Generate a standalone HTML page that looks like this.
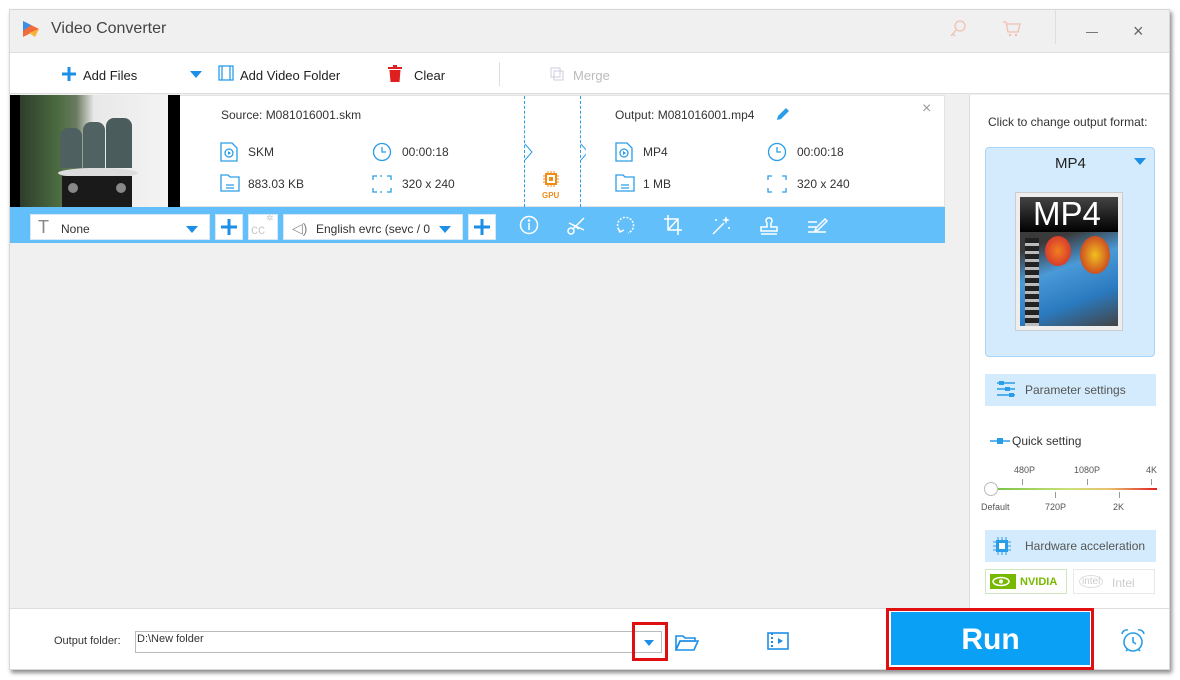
<!DOCTYPE html>
<html><head><meta charset="utf-8"><style>
*{box-sizing:border-box;margin:0;padding:0}
body{width:1180px;height:680px;background:#fff;font-family:"Liberation Sans",sans-serif;position:relative;overflow:hidden;font-size:12px;color:#333}
.a{position:absolute}
.win{left:9px;top:9px;width:1161px;height:661px;background:#f0f0f0;border:1px solid #d8d8d8;box-shadow:2px 3px 4px rgba(0,0,0,.45)}
.t{white-space:nowrap}
.ic{stroke:#2a9de8;fill:none;stroke-width:1.3}
.wi{stroke:#fff;fill:none;stroke-width:1.5}
.sel{background:#fff;border:1px solid #d6e8f7;height:26px}
</style></head><body>
<div class="a win"></div>
<!-- title -->
<svg class="a" style="left:21px;top:19px" width="22" height="20" viewBox="0 0 22 20"><path d="M2 2 L18 10 L2 18Z" fill="#f36b3a"/><path d="M2 2 L10 6 L2 12Z" fill="#3a8ee8"/><path d="M8 14 L18 10 L14 18Z" fill="#f8b43a"/></svg>
<div class="a t" style="left:51px;top:20px;font-size:16px;color:#444">Video Converter</div>
<svg class="a" style="left:948px;top:19px" width="20" height="20" viewBox="0 0 20 20"><circle cx="12" cy="7" r="5" fill="none" stroke="#f0c0b0" stroke-width="1.3"/><path d="M8 11 L3 17 M5 15l2 2" stroke="#f0c0b0" stroke-width="1.3"/></svg>
<svg class="a" style="left:1002px;top:19px" width="20" height="20" viewBox="0 0 20 20"><path d="M1 3h3l2 10h10l2-8H5" fill="none" stroke="#f0c0b0" stroke-width="1.3"/><circle cx="8" cy="16" r="1.2" fill="#f0c0b0"/><circle cx="14" cy="16" r="1.2" fill="#f0c0b0"/></svg>
<div class="a" style="left:1055px;top:10px;width:1px;height:34px;background:#ddd"></div>
<div class="a" style="left:1086px;top:32px;width:12px;height:1px;background:#777"></div>
<div class="a t" style="left:1133px;top:21px;font-size:18px;color:#666">×</div>
<!-- toolbar -->
<div class="a" style="left:10px;top:52px;width:1159px;height:42px;background:#fff;border-top:1px solid #ddd;border-bottom:1px solid #ddd"></div>
<svg class="a" style="left:61px;top:66px" width="16" height="16"><path d="M8 1v14M1 8h14" stroke="#1e8fe6" stroke-width="3"/></svg>
<div class="a t" style="left:83px;top:68px;font-size:13px;color:#222">Add Files</div>
<div class="a" style="left:190px;top:71px;border-left:6px solid transparent;border-right:6px solid transparent;border-top:7px solid #1e8fe6"></div>
<svg class="a" style="left:218px;top:65px" width="16" height="16"><rect x="1" y="1" width="14" height="14" class="ic" fill="none"/><path d="M4 1v14M12 1v14" class="ic"/></svg>
<div class="a t" style="left:240px;top:68px;font-size:13px;color:#222">Add Video Folder</div>
<svg class="a" style="left:388px;top:65px" width="14" height="17"><rect x="0" y="2" width="14" height="2" fill="#e02020"/><rect x="5" y="0" width="4" height="3" fill="#e02020"/><path d="M1.5 5h11l-1 12h-9z" fill="#e02020"/></svg>
<div class="a t" style="left:414px;top:68px;font-size:13px;color:#222">Clear</div>
<div class="a" style="left:499px;top:62px;width:1px;height:24px;background:#ddd"></div>
<svg class="a" style="left:550px;top:67px" width="14" height="14"><rect x="1" y="1" width="9" height="9" fill="none" stroke="#ccd" /><rect x="4" y="4" width="9" height="9" fill="none" stroke="#ccd"/></svg>
<div class="a t" style="left:573px;top:68px;font-size:13px;color:#bbb">Merge</div>
<!-- file item -->
<div class="a" style="left:10px;top:95px;width:935px;height:112px;background:#fff;border:1px solid #e3e3e3"></div>
<div class="a" style="left:10px;top:95px;width:170px;height:112px;background:#000"></div>
<div class="a" style="left:20px;top:95px;width:148px;height:112px;background:linear-gradient(90deg,#2e3e2a 0,#4a6a40 25%,#6a7a60 38%,#e8e8e8 50%,#f4f4f4 100%)"></div>
<div class="a" style="left:60px;top:128px;width:22px;height:40px;background:#4f6060;border-radius:8px 8px 0 0"></div>
<div class="a" style="left:83px;top:122px;width:22px;height:46px;background:#506262;border-radius:8px 8px 0 0"></div>
<div class="a" style="left:106px;top:118px;width:26px;height:50px;background:#4a5c5c;border-radius:8px 8px 0 0"></div>
<div class="a" style="left:58px;top:168px;width:80px;height:10px;background:#ddd;border-radius:50%"></div>
<div class="a" style="left:62px;top:176px;width:70px;height:31px;background:#1a1a1a"></div>
<div class="a" style="left:68px;top:183px;width:10px;height:10px;border-radius:50%;background:#888"></div>
<div class="a" style="left:116px;top:183px;width:10px;height:10px;border-radius:50%;background:#888"></div>
<div class="a t" style="left:221px;top:108px">Source: M081016001.skm</div>
<svg class="a" style="left:220px;top:142px" width="18" height="20"><path d="M1 1h11l5 5v13H1z" class="ic"/><circle cx="9" cy="11" r="4" class="ic"/><path d="M8 9l3 2-3 2z" fill="#2a9de8"/></svg>
<div class="a t" style="left:248px;top:145px">SKM</div>
<svg class="a" style="left:372px;top:142px" width="20" height="20"><circle cx="10" cy="10" r="8.5" class="ic" stroke-width="1.6"/><path d="M10 5v5h4" class="ic" stroke-width="1.6"/></svg>
<div class="a t" style="left:402px;top:145px">00:00:18</div>
<svg class="a" style="left:220px;top:174px" width="20" height="18"><path d="M1 1h7l2 2h9v14H1z" class="ic"/><path d="M6 11h8M6 14h8" class="ic"/></svg>
<div class="a t" style="left:248px;top:177px">883.03 KB</div>
<svg class="a" style="left:372px;top:175px" width="20" height="18"><path d="M1 5V1h4M15 1h4v4M19 13v4h-4M5 17H1v-4" class="ic" stroke-width="1.6"/><path d="M8 1h4M8 17h4" class="ic" stroke-dasharray="2 2"/></svg>
<div class="a t" style="left:402px;top:177px">320 x 240</div>
<div class="a" style="left:524px;top:96px;height:111px;border-left:1px dashed #2a9de8"></div>
<div class="a" style="left:580px;top:96px;height:111px;border-left:1px dashed #2a9de8"></div>
<svg class="a" style="left:524px;top:143px" width="62" height="18"><path d="M1 1l7 8-7 8M57 1l7 8-7 8" fill="none" stroke="#2a9de8"/></svg>
<svg class="a" style="left:543px;top:171px" width="16" height="16"><rect x="3" y="3" width="10" height="10" fill="none" stroke="#f08c1a" stroke-width="2"/><rect x="6" y="6" width="4" height="4" fill="#f08c1a"/><path d="M5 0v3M8 0v3M11 0v3M5 13v3M8 13v3M11 13v3M0 5h3M0 8h3M0 11h3M13 5h3M13 8h3M13 11h3" stroke="#f08c1a"/></svg>
<div class="a t" style="left:542px;top:191px;font-size:8px;color:#f08c1a;font-weight:bold">GPU</div>
<div class="a t" style="left:615px;top:108px">Output: M081016001.mp4</div>
<svg class="a" style="left:775px;top:107px" width="15" height="15"><path d="M2 13l1-4 8-8 3 3-8 8z" fill="#2a9de8"/></svg>
<div class="a t" style="left:922px;top:100px;font-size:16px;color:#999">×</div>
<svg class="a" style="left:615px;top:142px" width="18" height="20"><path d="M1 1h11l5 5v13H1z" class="ic"/><circle cx="9" cy="11" r="4" class="ic"/><path d="M8 9l3 2-3 2z" fill="#2a9de8"/></svg>
<div class="a t" style="left:643px;top:145px">MP4</div>
<svg class="a" style="left:767px;top:142px" width="20" height="20"><circle cx="10" cy="10" r="8.5" class="ic" stroke-width="1.6"/><path d="M10 5v5h4" class="ic" stroke-width="1.6"/></svg>
<div class="a t" style="left:797px;top:145px">00:00:18</div>
<svg class="a" style="left:615px;top:174px" width="20" height="18"><path d="M1 1h7l2 2h9v14H1z" class="ic"/><path d="M6 11h8M6 14h8" class="ic"/></svg>
<div class="a t" style="left:643px;top:177px">1 MB</div>
<svg class="a" style="left:767px;top:175px" width="20" height="18"><path d="M1 5V1h4M15 1h4v4M19 13v4h-4M5 17H1v-4" class="ic" stroke-width="1.6"/></svg>
<div class="a t" style="left:797px;top:177px">320 x 240</div>
<!-- blue bar -->
<div class="a" style="left:10px;top:207px;width:935px;height:36px;background:#63bff9"></div>
<div class="a sel" style="left:30px;top:214px;width:180px"></div>
<div class="a t" style="left:38px;top:217px;font-size:18px;color:#888;line-height:20px">T</div>
<div class="a t" style="left:61px;top:222px">None</div>
<div class="a" style="left:186px;top:226px;border-left:6px solid transparent;border-right:6px solid transparent;border-top:7px solid #1e8fe6"></div>
<div class="a sel" style="left:215px;top:214px;width:28px"></div>
<svg class="a" style="left:220px;top:218px" width="18" height="18"><path d="M9 1v16M1 9h16" stroke="#1e8fe6" stroke-width="3"/></svg>
<div class="a sel" style="left:248px;top:214px;width:30px"></div>
<div class="a t" style="left:251px;top:221px;font-size:14px;color:#ccc">cc</div>
<div class="a t" style="left:266px;top:213px;font-size:9px;color:#ccc">✲</div>
<div class="a sel" style="left:283px;top:214px;width:180px"></div>
<div class="a t" style="left:292px;top:220px;font-size:14px;color:#888">◁)</div>
<div class="a t" style="left:316px;top:222px;width:122px;overflow:hidden">English evrc (sevc / 0</div>
<div class="a" style="left:439px;top:226px;border-left:6px solid transparent;border-right:6px solid transparent;border-top:7px solid #1e8fe6"></div>
<div class="a sel" style="left:468px;top:214px;width:28px"></div>
<svg class="a" style="left:473px;top:218px" width="18" height="18"><path d="M9 1v16M1 9h16" stroke="#1e8fe6" stroke-width="3"/></svg>
<svg class="a" style="left:518px;top:214px" width="22" height="22"><circle cx="11" cy="11" r="8.5" class="wi"/><path d="M11 9v7" class="wi" stroke-width="2.5"/><circle cx="11" cy="6.5" r="1.3" fill="#fff"/></svg>
<svg class="a" style="left:566px;top:214px" width="20" height="22"><circle cx="5" cy="17" r="3" class="wi"/><path d="M7 15l11-11M3 9l15 7M7 11l6 4" class="wi"/></svg>
<svg class="a" style="left:614px;top:214px" width="22" height="22"><path d="M7 18a8 8 0 1 1 7 1" class="wi" stroke-dasharray="2 1.5"/><path d="M4 14l2 4 4-2" class="wi"/></svg>
<svg class="a" style="left:663px;top:214px" width="20" height="22"><path d="M5 1v15h14M1 5h14v16M5 16L15 5" class="wi"/></svg>
<svg class="a" style="left:710px;top:214px" width="22" height="22"><path d="M3 20L14 9" class="wi" stroke-width="2"/><path d="M16 2l1 3 3 1-3 1-1 3-1-3-3-1 3-1z" fill="#fff"/><circle cx="6" cy="6" r="1" fill="#fff"/><circle cx="19" cy="14" r="1" fill="#fff"/></svg>
<svg class="a" style="left:758px;top:214px" width="22" height="22"><path d="M9 13V9a3 3 0 1 1 4 0v4h6v4H3v-4zM3 20h16" class="wi"/></svg>
<svg class="a" style="left:806px;top:214px" width="22" height="22"><path d="M2 8h9M2 13h8M2 18h18M10 14l9-9 2 2-9 9-3 1z" class="wi"/></svg>
<!-- right panel -->
<div class="a" style="left:969px;top:95px;width:200px;height:513px;background:#fff;border-left:1px solid #ddd"></div>
<div class="a t" style="left:988px;top:115px">Click to change output format:</div>
<div class="a" style="left:985px;top:147px;width:170px;height:210px;background:#d3ebfc;border:1px solid #a9d6f5;border-radius:4px"></div>
<div class="a t" style="left:1055px;top:155px;font-size:15px;color:#222">MP4</div>
<div class="a" style="left:1134px;top:158px;border-left:6px solid transparent;border-right:6px solid transparent;border-top:7px solid #1e8fe6"></div>
<div class="a" style="left:1015px;top:192px;width:108px;height:139px;background:#eee;border:1px solid #ccc"></div>
<div class="a" style="left:1020px;top:197px;width:98px;height:35px;background:linear-gradient(#444,#000)"></div>
<div class="a t" style="left:1033px;top:195px;font-size:33px;color:#fff;font-weight:normal">MP4</div>
<div class="a" style="left:1020px;top:232px;width:98px;height:94px;background:linear-gradient(160deg,#3a3a3a 0,#3a3a3a 15%,#4a9ad8 40%,#2a7ac0 70%,#444 100%)"></div>
<div class="a" style="left:1025px;top:238px;width:14px;height:88px;background:repeating-linear-gradient(#222 0 5px,#bbb 5px 8px)"></div>
<div class="a" style="left:1080px;top:236px;width:30px;height:38px;background:radial-gradient(#f0c020,#c02020);border-radius:50%"></div>
<div class="a" style="left:1045px;top:236px;width:26px;height:30px;background:radial-gradient(#f08020,#d02030);border-radius:50%"></div>
<div class="a" style="left:985px;top:374px;width:171px;height:32px;background:#d3ebfc"></div>
<svg class="a" style="left:997px;top:381px" width="20" height="18"><path d="M0 2h18M0 8h18M0 14h18" stroke="#2a9de8" stroke-width="1.4"/><rect x="2" y="0" width="5" height="4" fill="#2a9de8"/><rect x="8" y="6" width="5" height="4" fill="#2a9de8"/><rect x="12" y="12" width="5" height="4" fill="#2a9de8"/></svg>
<div class="a t" style="left:1025px;top:383px;font-size:12px;color:#555">Parameter settings</div>
<svg class="a" style="left:990px;top:437px" width="20" height="8"><path d="M0 4h20" stroke="#2a9de8" stroke-width="1.5"/><rect x="7" y="1" width="6" height="6" fill="#2a9de8"/></svg>
<div class="a t" style="left:1012px;top:434px">Quick setting</div>
<div class="a t" style="left:1014px;top:465px;font-size:9px;color:#555">480P</div>
<div class="a t" style="left:1074px;top:465px;font-size:9px;color:#555">1080P</div>
<div class="a t" style="left:1146px;top:465px;font-size:9px;color:#555">4K</div>
<div class="a" style="left:1022px;top:479px;width:1px;height:6px;background:#999"></div>
<div class="a" style="left:1087px;top:479px;width:1px;height:6px;background:#999"></div>
<div class="a" style="left:1151px;top:479px;width:1px;height:6px;background:#999"></div>
<div class="a" style="left:998px;top:488px;width:159px;height:2px;background:linear-gradient(90deg,#7cc54a,#cde07a 45%,#e8c070 70%,#e02020)"></div>
<div class="a" style="left:1055px;top:492px;width:1px;height:6px;background:#999"></div>
<div class="a" style="left:1119px;top:492px;width:1px;height:6px;background:#999"></div>
<div class="a" style="left:984px;top:482px;width:14px;height:14px;border:1px solid #bbb;border-radius:50%;background:#fff"></div>
<div class="a t" style="left:981px;top:502px;font-size:9px;color:#555">Default</div>
<div class="a t" style="left:1045px;top:502px;font-size:9px;color:#555">720P</div>
<div class="a t" style="left:1113px;top:502px;font-size:9px;color:#555">2K</div>
<div class="a" style="left:985px;top:530px;width:171px;height:32px;background:#d3ebfc"></div>
<svg class="a" style="left:993px;top:537px" width="18" height="18"><rect x="3" y="3" width="12" height="12" fill="#2a9de8"/><rect x="6" y="6" width="6" height="6" fill="#fff"/><path d="M5 0v3M9 0v3M13 0v3M5 15v3M9 15v3M13 15v3M0 5h3M0 9h3M0 13h3M15 5h3M15 9h3M15 13h3" stroke="#2a9de8"/></svg>
<div class="a t" style="left:1025px;top:539px;color:#555">Hardware acceleration</div>
<div class="a" style="left:985px;top:569px;width:82px;height:25px;border:1px solid #cde7c0"></div>
<svg class="a" style="left:990px;top:574px" width="26" height="15"><rect width="26" height="15" fill="#76b900"/><ellipse cx="11" cy="7.5" rx="8" ry="4" fill="none" stroke="#fff" stroke-width="1.5"/><circle cx="11" cy="7.5" r="2" fill="#fff"/></svg>
<div class="a t" style="left:1020px;top:576px;font-size:11px;color:#76b900;font-weight:bold">NVIDIA</div>
<div class="a" style="left:1073px;top:569px;width:82px;height:25px;border:1px solid #e8e8e8"></div>
<div class="a t" style="left:1079px;top:575px;font-size:10px;color:#ccc;border:1px solid #ddd;border-radius:50%;padding:0 2px">intel</div>
<div class="a t" style="left:1112px;top:576px;color:#ccc">Intel</div>
<!-- bottom -->
<div class="a" style="left:10px;top:608px;width:1159px;height:61px;background:#fff;border-top:1px solid #ddd"></div>
<div class="a t" style="left:54px;top:635px;font-size:11px;color:#333">Output folder:</div>
<div class="a" style="left:135px;top:631px;width:527px;height:22px;border:1px solid #bbb;background:#fff"></div>
<div class="a t" style="left:137px;top:633px;font-size:11px">D:\New folder</div>
<div class="a" style="left:632px;top:622px;width:36px;height:39px;border:3px solid #e01010"></div>
<div class="a" style="left:644px;top:640px;border-left:5px solid transparent;border-right:5px solid transparent;border-top:6px solid #1e8fe6"></div>
<svg class="a" style="left:675px;top:633px" width="24" height="18"><path d="M1 3h7l2 2h10v3H5L1 17z" fill="none" stroke="#1e8fe6" stroke-width="1.6"/><path d="M1 17L5 8h18l-4 9z" fill="none" stroke="#1e8fe6" stroke-width="1.6"/></svg>
<svg class="a" style="left:767px;top:631px" width="24" height="20"><rect x="1" y="2" width="20" height="16" fill="none" stroke="#1e8fe6" stroke-width="1.6"/><path d="M5 2v16" stroke="#1e8fe6" stroke-dasharray="2 2" stroke-width="2"/><path d="M11 7l5 3-5 3z" fill="#1e8fe6"/></svg>
<div class="a" style="left:886px;top:608px;width:208px;height:62px;border:3px solid #e01010"></div>
<div class="a" style="left:891px;top:612px;width:199px;height:53px;background:#0aa0f5"></div>
<div class="a t" style="left:891px;top:623px;width:199px;text-align:center;font-size:30px;font-weight:bold;color:#fff">Run</div>
<svg class="a" style="left:1120px;top:628px" width="26" height="26"><circle cx="13" cy="14" r="9" fill="none" stroke="#2a9de8" stroke-width="1.6"/><path d="M13 9v5l3 2M2 6a5 5 0 0 1 6-4M24 6a5 5 0 0 0-6-4M6 23l2-2M20 23l-2-2" fill="none" stroke="#2a9de8" stroke-width="1.6"/></svg>
</body></html>
